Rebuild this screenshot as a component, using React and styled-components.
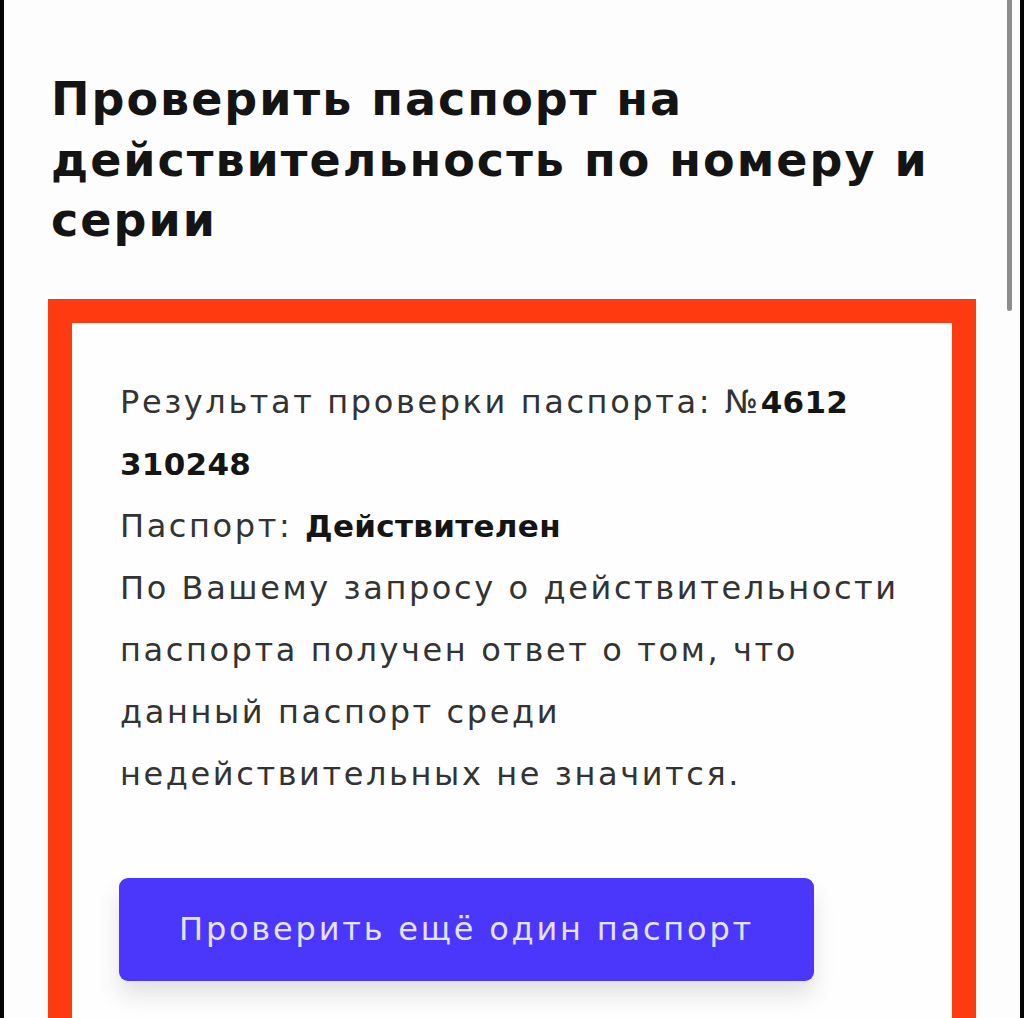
import styled, { createGlobalStyle } from 'styled-components';

const GlobalStyle = createGlobalStyle`
  html, body {
    margin: 0;
    padding: 0;
    background: #000;
  }
  * {
    box-sizing: border-box;
  }
`;

const Frame = styled.div`
  display: flex;
  width: 1024px;
  height: 1018px;
  overflow: hidden;
  background: #000;
`;

const Edge = styled.div`
  width: ${(p) => p.w}px;
  flex-shrink: 0;
  background: #050505;
`;

const Screen = styled.div`
  position: relative;
  flex: 1;
  background: #fdfdfd;
  padding: 69px 0 0 44px;
  font-family: 'DejaVu Sans', 'Liberation Sans', sans-serif;
`;

const ScrollThumb = styled.div`
  position: absolute;
  top: 0;
  right: 8px;
  width: 5px;
  height: 311px;
  border-radius: 0 0 3px 3px;
  background: #8d8d8d;
`;

const Heading = styled.h1`
  margin: 0 0 48px 3px;
  font-size: 46px;
  line-height: 60.5px;
  font-weight: 700;
  color: #141414;
  letter-spacing: 2px;
  white-space: nowrap;
`;

const ResultCard = styled.section`
  width: 928px;
  border: 24px solid #fd3a10;
  border-bottom: none;
  background: #fefefe;
  padding: 48px 40px 60px 48px;
`;

const Line = styled.p`
  margin: 0;
  font-size: 32px;
  line-height: 62px;
  font-weight: 400;
  color: #333;
  letter-spacing: 2.6px;
  white-space: nowrap;
`;

const Strong = styled.b`
  font-weight: 700;
  font-size: 31px;
  color: #151515;
  letter-spacing: 0.3px;
`;

const Button = styled.button`
  display: block;
  width: 695px;
  height: 103px;
  margin: 73px 0 0 -1px;
  border: none;
  border-radius: 9px;
  background: #4b37fb;
  color: #e6e2ff;
  font-family: inherit;
  font-size: 32px;
  letter-spacing: 2.8px;
  box-shadow: 0 14px 22px rgba(60, 60, 80, 0.14);
  cursor: pointer;
`;

const App = () => {
  return (
    <>
      <GlobalStyle />
      <Frame>
        <Edge w={4} />
        <Screen>
          <ScrollThumb />
          <Heading>
            Проверить паспорт на
            <br />
            действительность по номеру и
            <br />
            серии
          </Heading>
          <ResultCard>
            <Line>
              Результат проверки паспорта: №<Strong>4612</Strong>
            </Line>
            <Line>
              <Strong>310248</Strong>
            </Line>
            <Line>
              Паспорт: <Strong>Действителен</Strong>
            </Line>
            <Line>По Вашему запросу о действительности</Line>
            <Line>паспорта получен ответ о том, что</Line>
            <Line>данный паспорт среди</Line>
            <Line>недействительных не значится.</Line>
            <Button>Проверить ещё один паспорт</Button>
          </ResultCard>
        </Screen>
        <Edge w={4} />
      </Frame>
    </>
  );
};

export default App;
